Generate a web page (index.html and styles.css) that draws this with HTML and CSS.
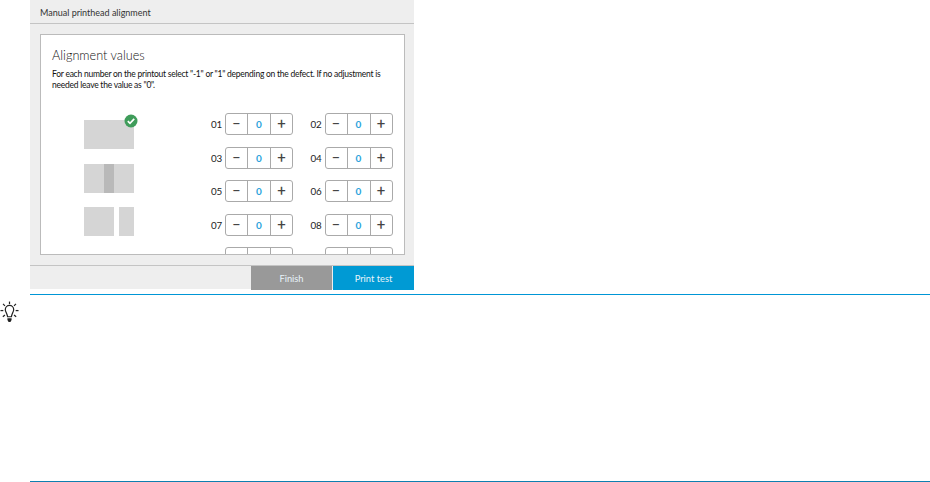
FILE: index.html
```html
<!DOCTYPE html>
<html lang="en">
<head>
    <meta charset="UTF-8">
    <title>Manual printhead alignment</title>
    <link rel="stylesheet" href="styles.css">
</head>
<body>

    <div class="panel">
        <div class="panel-header">Manual printhead alignment</div>

        <div class="panel-body">
            <div class="card">
                <h2>Alignment values</h2>
                <p>For each number on the printout select "-1" or "1" depending on the defect. If no adjustment is needed leave the value as "0".</p>

                <div class="card-content">
                    <!-- Defect samples -->
                    <div class="samples">
                        <div class="sample sample-ok">
                            <svg class="check" viewBox="0 0 14 14" width="14" height="14">
                                <circle cx="7" cy="7" r="6.5" fill="#3f9c5a"/>
                                <path d="M3.8 7.2 L6 9.4 L10.2 4.9" fill="none" stroke="#fff" stroke-width="1.7"/>
                            </svg>
                        </div>
                        <div class="sample sample-band"><span></span></div>
                        <div class="sample sample-gap"><span></span><span></span></div>
                    </div>

                    <!-- Steppers -->
                    <div class="values">
                        <div class="value-row"><label>01</label><div class="stepper"><b>&minus;</b><i>0</i><b>+</b></div></div>
                        <div class="value-row"><label>02</label><div class="stepper"><b>&minus;</b><i>0</i><b>+</b></div></div>
                        <div class="value-row"><label>03</label><div class="stepper"><b>&minus;</b><i>0</i><b>+</b></div></div>
                        <div class="value-row"><label>04</label><div class="stepper"><b>&minus;</b><i>0</i><b>+</b></div></div>
                        <div class="value-row"><label>05</label><div class="stepper"><b>&minus;</b><i>0</i><b>+</b></div></div>
                        <div class="value-row"><label>06</label><div class="stepper"><b>&minus;</b><i>0</i><b>+</b></div></div>
                        <div class="value-row"><label>07</label><div class="stepper"><b>&minus;</b><i>0</i><b>+</b></div></div>
                        <div class="value-row"><label>08</label><div class="stepper"><b>&minus;</b><i>0</i><b>+</b></div></div>
                        <div class="value-row"><div class="stepper"><b></b><i></i><b></b></div></div>
                        <div class="value-row"><div class="stepper"><b></b><i></i><b></b></div></div>
                    </div>
                </div>
            </div>
        </div>

        <div class="panel-footer">
            <button class="btn-finish">Finish</button>
            <button class="btn-print">Print test</button>
        </div>
    </div>

    <div class="tip">
        <svg class="tip-icon" viewBox="0 0 20 23" width="19" height="22">
            <g fill="none" stroke="#222" stroke-width="1.3">
                <path d="M5.6 9 A4.4 4.4 0 0 1 14.4 9 C14.4 11 12.4 13.5 12 16.5 H8 C7.6 13.5 5.6 11 5.6 9 Z"/>
                <path d="M10 0.5 V3.2"/>
                <path d="M3.2 3 L5.2 5"/>
                <path d="M16.8 3 L14.8 5"/>
                <path d="M0.5 10 H3.5"/>
                <path d="M16.5 10 H19.5"/>
                <path d="M3 16.5 L5.2 14.6"/>
                <path d="M17 16.5 L14.8 14.6"/>
            </g>
            <path d="M7.8 18 H12.2 V20 L11 22 H9 L7.8 20 Z" fill="#222"/>
        </svg>
        <div class="tip-box"></div>
    </div>

</body>
</html>
```

FILE: styles.css
```css
body {
    margin: 0;
    background: #fff;
    font-family: 'Lato', 'Liberation Sans', sans-serif;
    color: #333;
    height: 482px;
    overflow: hidden;
}

.panel {
    width: 384px;
    height: 289px;
    margin-left: 30px;
    background: #eee;
    display: flex;
    flex-direction: column;
}

.panel-header {
    height: 23px;
    flex: none;
    border-bottom: 1px solid #c4c4c4;
    font-size: 9px;
    line-height: 25px;
    padding-left: 10px;
    color: #333;
}

.panel-body {
    height: 241px;
    flex: none;
    padding: 10px 9px 0 10px;
    box-sizing: border-box;
}

.card {
    height: 221px;
    box-sizing: border-box;
    background: #fff;
    border: 1px solid #bbb;
    padding: 11px 11px 0;
    overflow: hidden;
}

.card h2 {
    margin: 0;
    font-size: 12.7px;
    font-weight: 300;
    line-height: 18px;
    color: #111;
}

.card p {
    margin: 5px 0 0;
    font-size: 8.5px;
    letter-spacing: -0.24px;
    line-height: 11px;
    color: #111;
}

.card-content {
    display: flex;
    margin-top: 22px;
}

.samples {
    width: 50px;
    margin-left: 31.5px;
    margin-top: 7px;
    display: flex;
    flex-direction: column;
    gap: 14.5px;
}

.sample {
    height: 29px;
    display: flex;
}

.sample-ok {
    background: #d5d5d5;
    position: relative;
}

.check {
    position: absolute;
    right: -4px;
    top: -6px;
}

.sample-band {
    background: #d5d5d5;
    justify-content: center;
}

.sample-band span {
    width: 10px;
    background: #b9b9b9;
}

.sample-gap {
    gap: 5px;
}

.sample-gap span {
    background: #d5d5d5;
    flex: 2;
}

.sample-gap span:last-child {
    flex: 1;
}

.values {
    margin-left: 60.5px;
    display: grid;
    grid-template-columns: 99px 99.5px;
    grid-auto-rows: 22px;
    row-gap: 11.6px;
    align-self: start;
}

.value-row {
    display: flex;
    align-items: center;
    justify-content: flex-end;
    gap: 3px;
}

.value-row label {
    font-size: 9.8px;
    letter-spacing: -0.2px;
    color: #222;
}

.stepper {
    width: 68px;
    height: 22px;
    box-sizing: border-box;
    border: 1px solid #aaa;
    border-radius: 3px;
    display: flex;
    line-height: 20px;
    text-align: center;
}

.stepper b {
    width: 21px;
    font-family: 'Roboto', sans-serif;
    font-weight: 400;
    font-size: 15px;
    color: #444;
}

.stepper i {
    flex: 1;
    font-style: normal;
    font-size: 10px;
    font-weight: 700;
    color: #2ba3dc;
    border-left: 1px solid #aaa;
    border-right: 1px solid #aaa;
}

.panel-footer {
    height: 24px;
    flex: none;
    border-top: 1px solid #c4c4c4;
    display: flex;
    justify-content: flex-end;
    gap: 1px;
}

.panel-footer button {
    width: 81px;
    height: 24px;
    border: none;
    padding: 0;
    color: #e8f4fa;
    font-family: inherit;
    font-size: 9.3px;
}

.btn-finish {
    background: #999;
}

.btn-print {
    background: #009ad4;
}

.tip {
    position: relative;
    margin-left: 30px;
}

.tip-box {
    margin-top: 5px;
    height: 186px;
    border-top: 1px solid #0096d6;
    border-bottom: 1px solid #0e7fb0;
}

.tip-icon {
    position: absolute;
    left: -30px;
    top: 7px;
}
```
